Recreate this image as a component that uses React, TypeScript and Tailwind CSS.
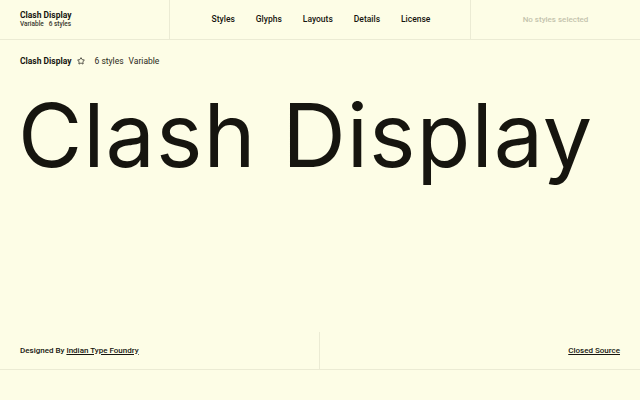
import React from "react";
import { Star } from "lucide-react";

const navItems = ["Styles", "Glyphs", "Layouts", "Details", "License"];

export default function App() {
  return (
    <div
      className="h-[400px] w-full flex flex-col bg-[#fdfde6] text-[#16150f] overflow-hidden"
      style={{ fontFamily: "Roboto, 'Liberation Sans', sans-serif" }}
    >
      {/* top bar */}
      <header className="h-10 flex border-b border-[#ebebd4]">
        <div className="w-[170px] border-r border-[#ebebd4] flex flex-col justify-center pl-5 pb-[1px]">
          <span className="text-[8.5px] font-bold leading-[10px]">Clash Display</span>
          <span className="text-[6.5px] font-medium leading-[9px] text-[#3a392f]">
            Variable&nbsp;&nbsp; 6 styles
          </span>
        </div>
        <nav className="flex-1 flex items-center justify-center gap-[21px] pl-[2px]">
          {navItems.map((item) => (
            <a key={item} className="text-[8.5px] font-medium cursor-pointer">
              {item}
            </a>
          ))}
        </nav>
        <div className="w-[170px] border-l border-[#ebebd4] flex items-center justify-center">
          <span className="text-[8px] font-medium text-[#c4c3ad]">No styles selected</span>
        </div>
      </header>

      {/* font meta row */}
      <div className="flex items-center pl-5 pt-[15px] text-[8.5px]">
        <span className="font-bold">Clash Display</span>
        <Star className="ml-[5px] w-[8px] h-[8px] text-[#16150f]" strokeWidth={2.2} />
        <span className="ml-[10px] text-[#2a2920]">6 styles</span>
        <span className="ml-[5px] text-[#2a2920]">Variable</span>
      </div>

      {/* specimen */}
      <h1
        className="pl-[18px] mt-[23px] text-[88px] leading-none font-normal tracking-[1px] whitespace-nowrap"
        style={{ fontFamily: "Inter, 'Liberation Sans', sans-serif" }}
      >
        Clash Display
      </h1>

      <div className="flex-1" />

      {/* footer */}
      <footer className="h-[38px] flex border-b border-[#ebebd4] text-[8px] font-medium">
        <div className="w-1/2 border-r border-[#ebebd4] flex items-center pl-5">
          <span>
            Designed By <a className="underline underline-offset-1 cursor-pointer">Indian Type Foundry</a>
          </span>
        </div>
        <div className="w-1/2 flex items-center justify-end pr-5">
          <a className="underline underline-offset-1 cursor-pointer">Closed Source</a>
        </div>
      </footer>
      <div className="h-[30px]" />
    </div>
  );
}
